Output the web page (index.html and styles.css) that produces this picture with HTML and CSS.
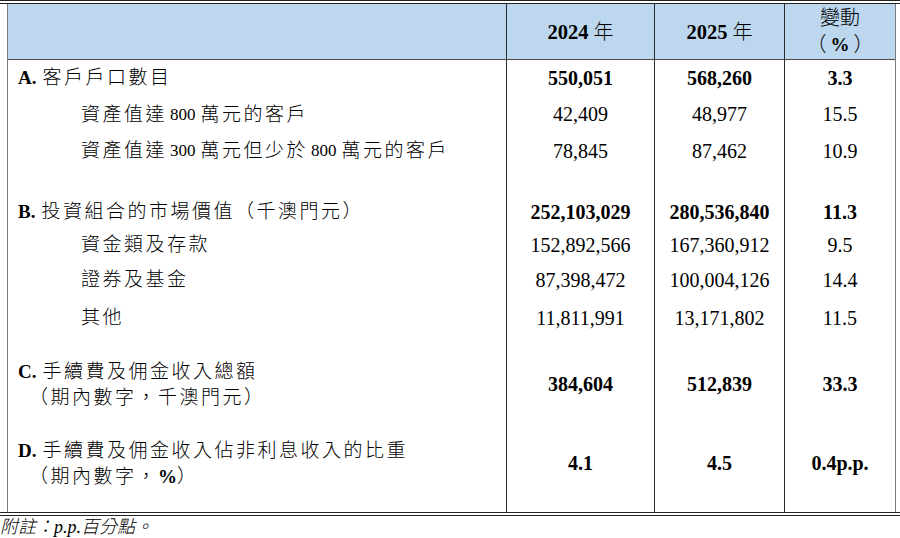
FILE: index.html
```html
<!DOCTYPE html>
<html lang="zh-Hant">
<head>
<meta charset="utf-8">
<title>客戶戶口數目</title>
<link rel="stylesheet" href="styles.css">
</head>
<body>
<div class="sheet">
  <div class="rule"></div>
  <div class="table">
    <div class="cell head"></div>
    <div class="cell head num"><span class="en b yr">2024</span>年</div>
    <div class="cell head num"><span class="en b yr">2025</span>年</div>
    <div class="cell head num stack"><span>變動</span><span>（<span class="en b hpct">%</span>）</span></div>

    <div class="cell label"><span class="en b key">A.</span>客戶戶口數目</div>
    <div class="cell num b">550,051</div>
    <div class="cell num b">568,260</div>
    <div class="cell num b">3.3</div>

    <div class="cell label sub">資產值達<span class="en gap">800</span>萬元的客戶</div>
    <div class="cell num">42,409</div>
    <div class="cell num">48,977</div>
    <div class="cell num">15.5</div>

    <div class="cell label sub">資產值達<span class="en gap">300</span>萬元但少於<span class="en gap">800</span>萬元的客戶</div>
    <div class="cell num">78,845</div>
    <div class="cell num">87,462</div>
    <div class="cell num">10.9</div>

    <div class="cell"></div><div class="cell"></div><div class="cell"></div><div class="cell"></div>

    <div class="cell label"><span class="en b key">B.</span>投資組合的市場價值（千澳門元）</div>
    <div class="cell num b">252,103,029</div>
    <div class="cell num b">280,536,840</div>
    <div class="cell num b">11.3</div>

    <div class="cell label sub">資金類及存款</div>
    <div class="cell num">152,892,566</div>
    <div class="cell num">167,360,912</div>
    <div class="cell num">9.5</div>

    <div class="cell label sub">證券及基金</div>
    <div class="cell num">87,398,472</div>
    <div class="cell num">100,004,126</div>
    <div class="cell num">14.4</div>

    <div class="cell label sub">其他</div>
    <div class="cell num">11,811,991</div>
    <div class="cell num">13,171,802</div>
    <div class="cell num">11.5</div>

    <div class="cell label multi">
      <div><span class="en b key">C.</span>手續費及佣金收入總額</div>
      <div class="cont">（期內數字，千澳門元）</div>
    </div>
    <div class="cell num b">384,604</div>
    <div class="cell num b">512,839</div>
    <div class="cell num b">33.3</div>

    <div class="cell label multi">
      <div><span class="en b key">D.</span>手續費及佣金收入佔非利息收入的比重</div>
      <div class="cont">（期內數字，<span class="en b pct">%</span>）</div>
    </div>
    <div class="cell num b">4.1</div>
    <div class="cell num b">4.5</div>
    <div class="cell num b">0.4p.p.</div>

    <div class="cell"></div><div class="cell"></div><div class="cell"></div><div class="cell"></div>
  </div>
  <div class="rule"></div>
  <p class="note">附註：<span class="en">p.p.</span>百分點。</p>
</div>
</body>
</html>
```

FILE: styles.css
```css
html, body {
  margin: 0;
  padding: 0;
  background: #ffffff;
}

body {
  font-family: "Liberation Serif", "Noto Sans CJK TC", serif;
  color: #000000;
  text-spacing-trim: space-all;
}

.sheet {
  width: 900px;
}

.rule {
  box-sizing: border-box;
  height: 4px;
  border-top: 1px solid #222222;
  border-bottom: 1px solid #222222;
}

.table {
  box-sizing: border-box;
  width: 889px;
  margin-left: 7px;
  border-left: 1px solid #7a7a7a;
  border-right: 1px solid #7a7a7a;
  display: grid;
  grid-template-columns: 498px 148px 130px 111px;
  grid-template-rows: 56px 36px 37px 36px 25px 36px 30px 40px 36px 96px 62px 18px;
}

.cell {
  box-sizing: border-box;
  display: flex;
  align-items: center;
  min-width: 0;
  white-space: nowrap;
}

.cell:not(:nth-child(4n+1)) {
  border-left: 1px solid #2a2a2a;
}

.head {
  background: #bdd7ee;
  border-bottom: 1px solid #4a4a4a;
  font-size: 20px;
  font-weight: 300;
  line-height: 26px;
}

.num {
  justify-content: center;
  font-size: 20px;
}

.stack {
  flex-direction: column;
  justify-content: center;
  align-items: center;
}

.label {
  font-size: 19px;
  font-weight: 300;
  letter-spacing: 2.5px;
  line-height: 26px;
  padding-left: 10px;
}

.label.sub {
  padding-left: 73px;
}

.label.multi {
  flex-direction: column;
  align-items: flex-start;
  justify-content: center;
  padding-top: 2px;
}

.cont {
  padding-left: 11px;
}

.en {
  font-size: 19px;
  letter-spacing: 0;
}

.en.gap {
  font-size: 17px;
  font-weight: 400;
  margin: 0 5px 0 3px;
}

.head .en {
  font-size: 20.5px;
}

.head .hpct {
  font-size: 19px;
  margin: 0 4px;
}

.yr {
  margin-right: 5px;
}

.b {
  font-weight: bold;
}

.key {
  margin-right: 6px;
}

.pct {
  font-size: 19px;
}

.note {
  margin: 0;
  font-size: 18px;
  font-weight: 300;
  line-height: 22px;
  font-style: italic;
}

.note .en {
  font-size: 18px;
  font-weight: 400;
}
```
